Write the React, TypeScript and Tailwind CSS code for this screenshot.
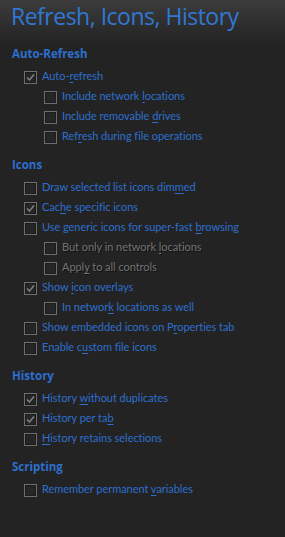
import React from "react";

type Item = {
  label: string;
  key: number; // index of the underlined access key
  checked?: boolean;
  level?: 1 | 2;
  disabled?: boolean;
};

type Section = { title: string; items: Item[] };

const sections: Section[] = [
  {
    title: "Auto-Refresh",
    items: [
      { label: "Auto-refresh", key: 5, checked: true },
      { label: "Include network locations", key: 16, level: 2 },
      { label: "Include removable drives", key: 18, level: 2 },
      { label: "Refresh during file operations", key: 3, level: 2 },
    ],
  },
  {
    title: "Icons",
    items: [
      { label: "Draw selected list icons dimmed", key: 28 },
      { label: "Cache specific icons", key: 3, checked: true },
      { label: "Use generic icons for super-fast browsing", key: 33 },
      { label: "But only in network locations", key: 20, level: 2, disabled: true },
      { label: "Apply to all controls", key: 4, level: 2, disabled: true },
      { label: "Show icon overlays", key: 5, checked: true },
      { label: "In network locations as well", key: 9, level: 2 },
      { label: "Show embedded icons on Properties tab", key: 24 },
      { label: "Enable custom file icons", key: 8 },
    ],
  },
  {
    title: "History",
    items: [
      { label: "History without duplicates", key: 8, checked: true },
      { label: "History per tab", key: 14, checked: true },
      { label: "History retains selections", key: 0 },
    ],
  },
  {
    title: "Scripting",
    items: [{ label: "Remember permanent variables", key: 19 }],
  },
];

const CheckBox = ({ checked }: { checked?: boolean }) => (
  <svg width="13" height="13" viewBox="0 0 13 13" className="shrink-0">
    <rect x="0.5" y="0.5" width="12" height="12" fill="#262626" stroke="#6e6e6e" />
    <rect x="1.5" y="1.5" width="10" height="10" fill="none" stroke="#1c1c1c" />
    {checked && (
      <path d="M3 6.5 L5.5 9 L10 3.5" fill="none" stroke="#868686" strokeWidth="1.4" />
    )}
  </svg>
);

const Row = ({ item }: { item: Item }) => {
  const { label, key } = item;
  return (
    <div
      className={`flex h-5 items-center gap-[5px] ${item.level === 2 ? "pl-[44px]" : "pl-[24px]"}`}
    >
      <CheckBox checked={item.checked} />
      <span
        className={`-mt-[2px] whitespace-nowrap ${item.disabled ? "text-[#747474] [text-shadow:1px_1px_0_#111]" : "text-[#2d6fcf]"}`}
      >
        {label.slice(0, key)}
        <span className="underline underline-offset-2">{label[key]}</span>
        {label.slice(key + 1)}
      </span>
    </div>
  );
};

export default function App() {
  return (
    <div
      className="h-[537px] w-[285px] overflow-hidden bg-[#232323] text-[11px] tracking-[-0.05px]"
      style={{ fontFamily: "Lato, sans-serif" }}
    >
      <div
        className="h-[44px] bg-gradient-to-b from-[#3c3c3c] to-[#232323] pl-[11px] pt-px"
        style={{ fontFamily: '"Open Sans", sans-serif' }}
      >
        <h1 className="text-[23px] leading-[30px] tracking-[-0.5px] text-[#3078d4]">
          Refresh, Icons, History
        </h1>
      </div>
      {sections.map((s, i) => (
        <div key={s.title} className={i === 0 ? "" : "mt-[8px]"}>
          <div
            className="flex h-5 items-center pl-[12px] text-[11.5px] font-bold tracking-normal text-[#2d6fcf]"
            style={{ fontFamily: '"Open Sans", sans-serif' }}
          >
            {s.title}
          </div>
          <div className="pt-[3px]">
            {s.items.map((it) => (
              <Row key={it.label} item={it} />
            ))}
          </div>
        </div>
      ))}
    </div>
  );
}
